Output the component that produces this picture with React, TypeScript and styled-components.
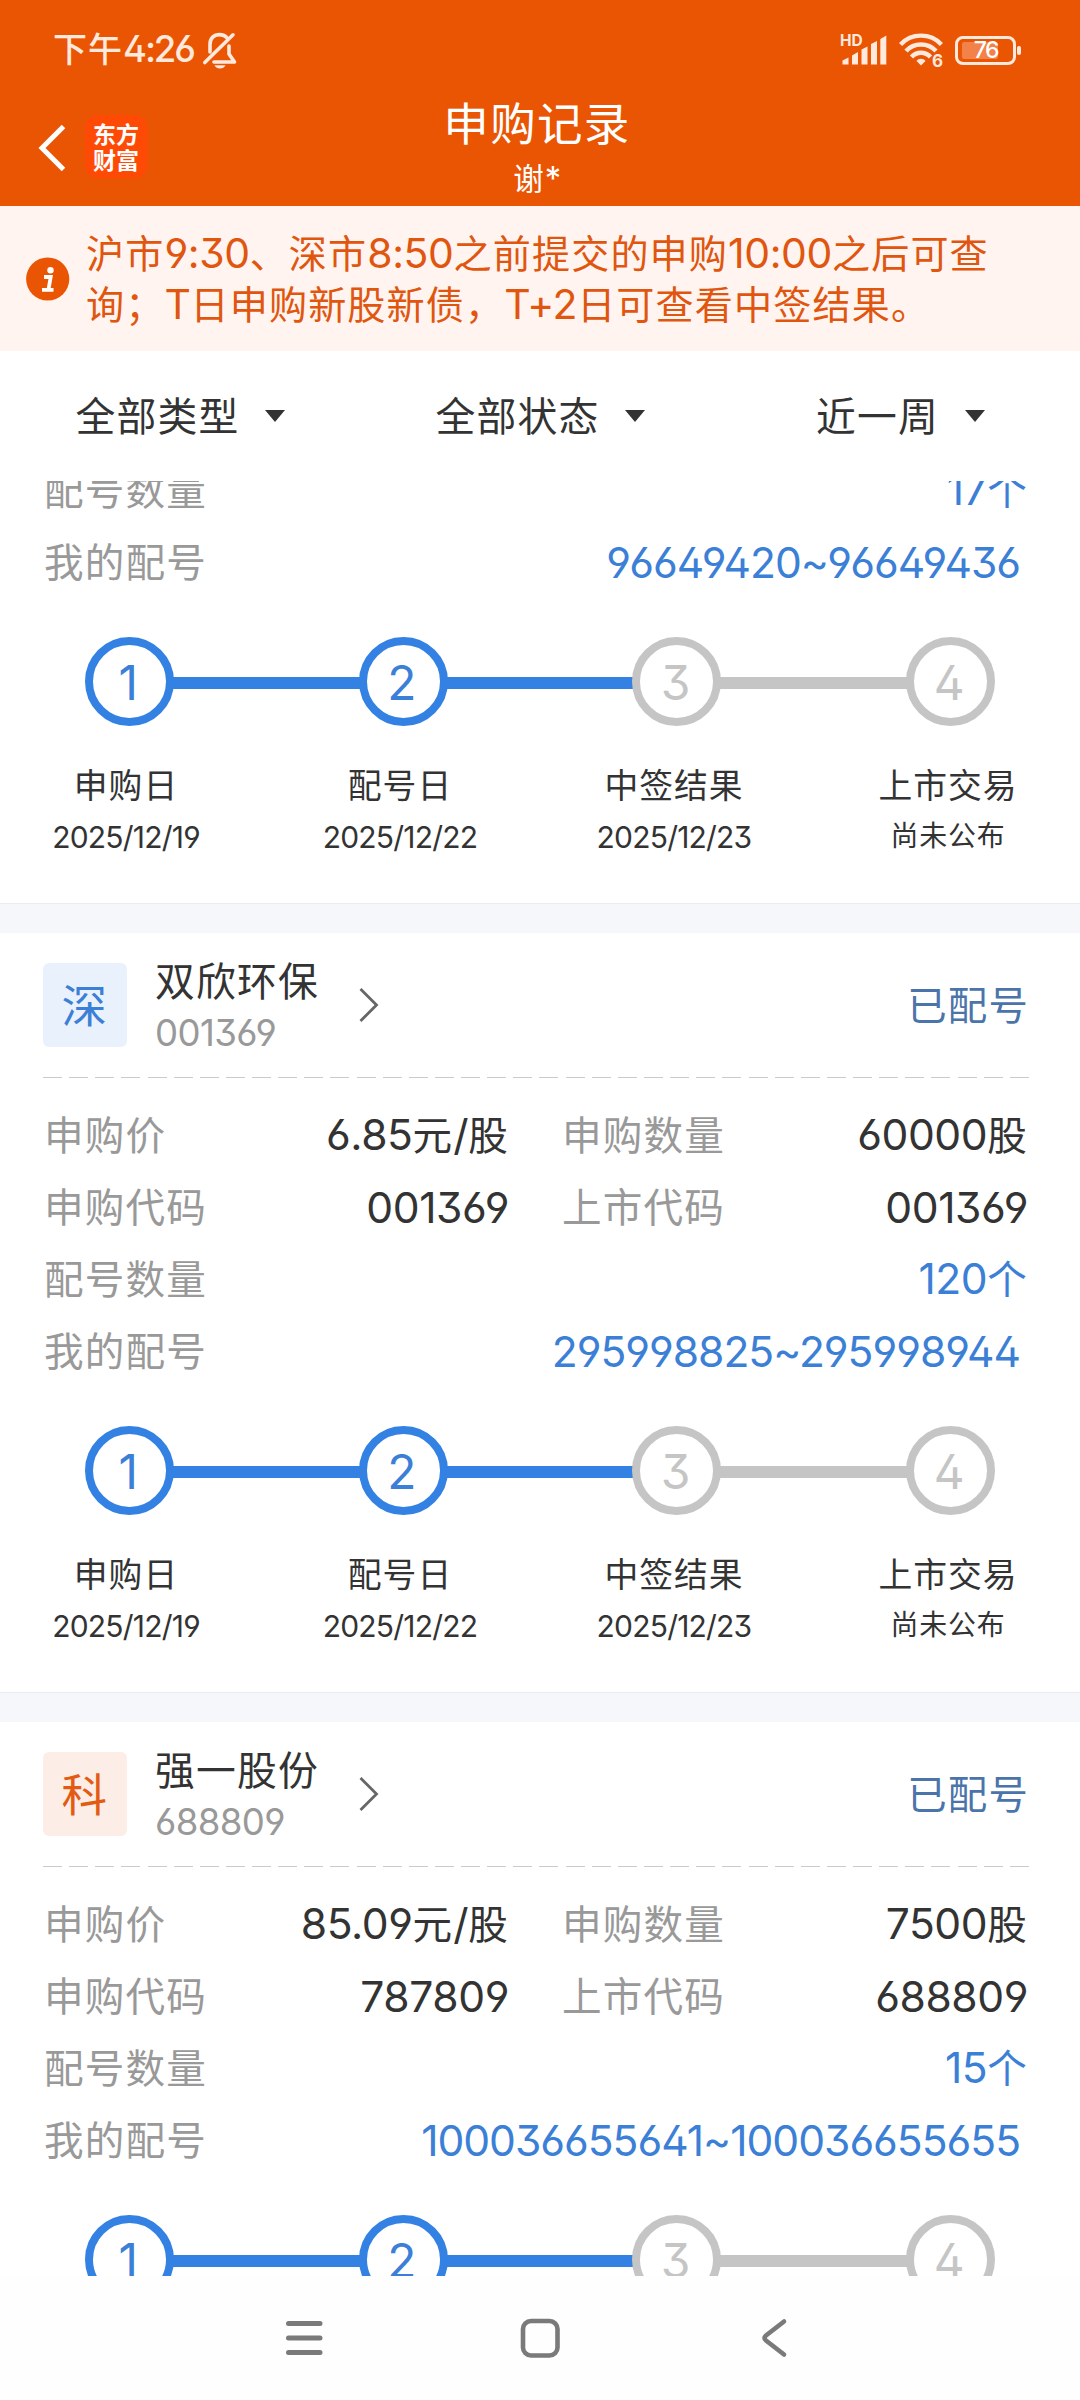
import React from "react";
import styled, { createGlobalStyle } from "styled-components";

const ORANGE = "#ea5504";
const BLUE = "#3381e3";
const GREY = "#c5c5c5";
const STATUS = "#ffe9dc";

const GlobalStyle = createGlobalStyle`
  * { box-sizing: border-box; }
  body {
    margin: 0;
    background: #fff;
    font-family: "Noto Sans CJK SC", sans-serif;
    color: #333;
  }
`;

/* ---------- text ---------- */

const Line = styled.span<{ $size: number; $color?: string; $weight?: number; $lift: boolean }>`
  font-size: ${(p) => p.$size}px;
  color: ${(p) => p.$color ?? "#333"};
  font-weight: ${(p) => p.$weight ?? 400};
  letter-spacing: 0.03em;
  white-space: nowrap;
  line-height: 1.25;
  padding-bottom: ${(p) => (p.$lift ? 3 : 0)}px;
`;

const Latin = styled.span<{ $weight?: number; $tight?: number }>`
  font-family: Inter, sans-serif;
  font-size: 1.075em;
  font-weight: ${(p) => p.$weight ?? 390};
  font-feature-settings: "ss01" 1;
  letter-spacing: ${(p) => p.$tight ?? -0.01}em;
  line-height: 1;
`;

type TextProps = { size: number; color?: string; weight?: number; tight?: number; children: string };

const Text = ({ size, color, weight, tight, children }: TextProps) => (
  <Line $size={size} $color={color} $weight={weight} $lift={/[^\x20-\x7e]/.test(children)}>
    {children
      .split(/([\x20-\x7e]+)/)
      .filter(Boolean)
      .map((run, i) =>
        /^[\x20-\x7e]/.test(run) ? (
          <Latin key={i} $weight={weight} $tight={tight}>{run}</Latin>
        ) : (
          run
        ),
      )}
  </Line>
);

/* ---------- frame ---------- */

const Screen = styled.div`
  width: 1080px;
  height: 2400px;
  display: flex;
  flex-direction: column;
  overflow: hidden;
  background: #fff;
`;

const Header = styled.header`
  height: 206px;
  flex: none;
  background: ${ORANGE};
`;

const StatusBar = styled.div`
  height: 96px;
  display: flex;
  align-items: center;
  justify-content: space-between;
  padding: 4px 59px 0 53px;
`;

const StatusGroup = styled.div<{ $gap: number }>`
  display: flex;
  align-items: center;
  gap: ${(p) => p.$gap}px;
`;

const TitleBar = styled.div`
  height: 110px;
  display: grid;
  grid-template-columns: 180px 1fr 180px;
`;

const TitleLeft = styled.div`
  display: flex;
  align-items: flex-start;
  padding: 19px 0 0 38px;
`;

const Logo = styled.div`
  width: 62px;
  height: 63px;
  margin-left: 18px;
  border-radius: 12px;
  background: #ff4a06;
  color: #fff;
  font-size: 23px;
  font-weight: 700;
  line-height: 26px;
  text-align: center;
  padding-top: 5px;
`;

const TitleCenter = styled.div`
  display: flex;
  flex-direction: column;
  align-items: center;
  padding-right: 6px;
`;

const TitleLine = styled.div`
  height: 53px;
  display: flex;
  align-items: center;
`;

const SubLine = styled.div`
  height: 60px;
  display: flex;
  align-items: center;
`;

/* ---------- notice and filters ---------- */

const Notice = styled.div`
  height: 145px;
  flex: none;
  display: flex;
  align-items: center;
  padding-left: 26px;
  background: #fff4ef;
`;

const NoticeText = styled.div`
  display: flex;
  flex-direction: column;
  margin-left: 16px;
`;

const NoticeLine = styled.div`
  height: 51px;
  display: flex;
  align-items: center;
`;

const Filters = styled.div`
  height: 130px;
  flex: none;
  display: grid;
  grid-template-columns: repeat(3, 1fr);
`;

const Filter = styled.div`
  display: flex;
  align-items: center;
  justify-content: center;
  gap: 26px;
  padding: 0 0 2px 1px;
`;

const Caret = styled.i`
  margin-top: 2px;
  border: 10px solid transparent;
  border-top: 12px solid #333;
  border-bottom: 0;
`;

/* ---------- cards ---------- */

const List = styled.main`
  height: 1795px;
  flex: none;
  overflow: hidden;
`;

const Card = styled.section<{ $partial?: boolean }>`
  height: ${(p) => (p.$partial ? 450 : 759)}px;
  margin-top: ${(p) => (p.$partial ? -28 : 0)}px;
`;

const Band = styled.div`
  height: 30px;
  background: #f6f7fa;
  border-top: 1px solid #ececee;
`;

const CardHead = styled.div`
  height: 144px;
  display: flex;
  align-items: flex-start;
  padding: 30px 51px 0 43px;
`;

const Badge = styled.div<{ $bg: string }>`
  width: 84px;
  height: 84px;
  border-radius: 6px;
  background: ${(p) => p.$bg};
  display: flex;
  align-items: center;
  justify-content: center;
`;

const NameBlock = styled.div`
  margin-left: 28px;
  width: 204px;
  display: flex;
  flex-direction: column;
`;

const NameLine = styled.div<{ $h: number }>`
  height: ${(p) => p.$h}px;
  display: flex;
  align-items: center;
`;

const HeadStatus = styled.div`
  height: 82px;
  margin-left: auto;
  display: flex;
  align-items: center;
`;

const Arrow = styled.svg`
  margin-top: 23px;
`;

const Dashes = styled.div`
  height: 1px;
  width: 986px;
  margin: 0 0 20px 43px;
  background: repeating-linear-gradient(90deg, #cacaca 0 19px, transparent 19px 26.13px);
`;

const Row = styled.div`
  height: 72px;
  display: grid;
  grid-template-columns: 465px 466px;
  column-gap: 53px;
  padding-left: 44px;
`;

const WideRow = styled(Row)`
  grid-template-columns: 984px;
`;

const Cell = styled.div<{ $inset?: number }>`
  display: flex;
  align-items: center;
  justify-content: space-between;
  padding-right: ${(p) => p.$inset ?? 0}px;
`;

const Track = styled.div`
  height: 89px;
  margin: 39.7px 85px 0;
  display: flex;
  align-items: center;
`;

const Dot = styled.div<{ $color: string }>`
  width: 89px;
  height: 89px;
  flex: none;
  border: 8.5px solid ${(p) => p.$color};
  border-radius: 50%;
  display: flex;
  align-items: center;
  justify-content: center;
  padding-right: 3px;
`;

const Bar = styled.div<{ $color: string }>`
  flex: 1;
  height: 12px;
  margin: 3px -1px 0;
  background: ${(p) => p.$color};
`;

const Captions = styled.div`
  display: flex;
  justify-content: space-between;
  padding: 34px 47px 0 41px;
`;

const Caption = styled.div`
  width: 170px;
  display: flex;
  flex-direction: column;
  align-items: center;
`;

const NavBar = styled.nav`
  height: 124px;
  flex: none;
  background: #fefefe;
  display: flex;
  align-items: center;
  justify-content: center;
  gap: 195px;
`;

/* ---------- drawings ---------- */

const BellOff = () => (
  <svg width="36" height="38" viewBox="0 0 36 38" fill="none" stroke={STATUS} strokeWidth="3.6" strokeLinecap="round" strokeLinejoin="round">
    <path d="M8 21V13.500C8 7 12 3.600 17.500 3.600c3.400 0 6 1.200 7.600 3.200" />
    <path d="M27 15v8l5.500 8H12" />
    <path d="M2.800 31.500 31 3.800" />
    <path d="M12.500 34.200h11c-1.200 2.200-3 3.300-5.500 3.300s-4.300-1.100-5.500-3.300z" fill={STATUS} stroke="none" />
  </svg>
);

const HdMark = styled.span`
  position: absolute;
  left: 0;
  top: -1px;
  font: 700 15.5px/16px Inter, sans-serif;
  color: ${STATUS};
`;

const SignalBox = styled.div`
  position: relative;
  width: 47px;
  height: 32px;
`;

const Signal = () => (
  <SignalBox>
    <svg width="47" height="32" viewBox="0 0 47 32" fill={STATUS}>
      <path d="M2.500 26.500 8.500 23.500V30.500H2.500z" />
      <path d="M12 21.500 18 18V30.500H12z" />
      <path d="M21.500 15.500 27.500 12.500V30.500H21.500z" />
      <path d="M31 10 37 7V30.500H31z" />
      <path d="M40.300 5 46.300 1.500V30.500H40.300z" />
    </svg>
    <HdMark>HD</HdMark>
  </SignalBox>
);

const WifiBox = styled.div`
  position: relative;
  width: 44px;
  height: 34px;
`;

const WifiMark = styled.span`
  position: absolute;
  right: 0;
  bottom: -3px;
  font: 700 17px/18px Inter, sans-serif;
  color: ${STATUS};
`;

const Wifi = () => (
  <WifiBox>
    <svg width="44" height="34" viewBox="0 0 44 34" fill="none" stroke={STATUS} strokeWidth="4.400">
      <path d="M1.500 11.500C12.500-.3 31.500-.3 42.500 11.500" />
      <path d="M7 18C15 9.300 29 9.300 37 18" />
      <path d="M12.500 24C17.500 18.300 26.500 18.300 31.500 24" />
      <path d="M17.500 28c2-3 7-3 9 0L22 32.500z" fill={STATUS} stroke="none" />
    </svg>
    <WifiMark>6</WifiMark>
  </WifiBox>
);

const BatteryRow = styled.div`
  display: flex;
  align-items: center;
  gap: 1.5px;
`;

const BatteryBody = styled.div`
  width: 60.5px;
  height: 29px;
  border: 3px solid ${STATUS};
  border-radius: 8px;
  padding: 3px 4px;
  display: flex;
`;

const BatteryFill = styled.div`
  width: 36px;
  height: 17px;
  border-radius: 2px;
  background: #f2814a;
  color: #fff;
  font: 500 23px/17px Inter, sans-serif;
  letter-spacing: -1.5px;
  display: flex;
  justify-content: flex-end;
`;

const BatteryTip = styled.div`
  width: 4px;
  height: 9px;
  border-radius: 2px;
  background: ${STATUS};
`;

const InfoIcon = () => (
  <svg width="44" height="44" viewBox="0 0 44 44">
    <circle cx="21.700" cy="22" r="21.600" fill={ORANGE} />
    <circle cx="24.500" cy="13.200" r="3.200" fill="#fff" />
    <path d="M18 20h6.700l-2.200 12.500M16 32.800h11.500" fill="none" stroke="#fff" strokeWidth="3.800" />
  </svg>
);

/* ---------- data ---------- */

type Issue = {
  head?: {
    board: string;
    boardColor: string;
    boardBg: string;
    name: string;
    code: string;
    price: string;
    amount: string;
    applyCode: string;
  };
  count: string;
  range: string;
};

const issues: Issue[] = [
  { count: "17个", range: "96649420~96649436" },
  {
    head: {
      board: "深", boardColor: "#3b7fd6", boardBg: "#e9f2fc",
      name: "双欣环保", code: "001369", price: "6.85元/股", amount: "60000股", applyCode: "001369",
    },
    count: "120个",
    range: "295998825~295998944",
  },
  {
    head: {
      board: "科", boardColor: "#e35a12", boardBg: "#fceee6",
      name: "强一股份", code: "688809", price: "85.09元/股", amount: "7500股", applyCode: "787809",
    },
    count: "15个",
    range: "100036655641~100036655655",
  },
];

const steps = [
  { label: "申购日", date: "2025/12/19", done: true },
  { label: "配号日", date: "2025/12/22", done: true },
  { label: "中签结果", date: "2025/12/23", done: false },
  { label: "上市交易", date: "尚未公布", done: false },
];

const Label = ({ children }: { children: string }) => <Text size={39.6} color="#999">{children}</Text>;
const Value = ({ children }: { children: string }) => <Text size={39.6}>{children}</Text>;
const Link = ({ tight, children }: { tight?: number; children: string }) => (
  <Text size={39.6} color="#3b80d6" tight={tight}>{children}</Text>
);

function IssueCard({ issue }: { issue: Issue }) {
  const h = issue.head;
  return (
    <Card $partial={!h}>
      {h && (
        <>
          <CardHead>
            <Badge $bg={h.boardBg}>
              <Text size={45.5} color={h.boardColor}>{h.board}</Text>
            </Badge>
            <NameBlock>
              <NameLine $h={35}><Text size={39.8}>{h.name}</Text></NameLine>
              <NameLine $h={69}><Text size={34} color="#999" tight={-0.016}>{h.code}</Text></NameLine>
            </NameBlock>
            <Arrow width="22" height="38" viewBox="0 0 22 38" fill="none" stroke="#666" strokeWidth="2.800">
              <path d="M1.500 3 17.500 19 1.500 35" />
            </Arrow>
            <HeadStatus><Text size={39.4} color="#4a74aa">已配号</Text></HeadStatus>
          </CardHead>
          <Dashes />
          <Row>
            <Cell><Label>申购价</Label><Value>{h.price}</Value></Cell>
            <Cell><Label>申购数量</Label><Value>{h.amount}</Value></Cell>
          </Row>
          <Row>
            <Cell><Label>申购代码</Label><Value>{h.applyCode}</Value></Cell>
            <Cell><Label>上市代码</Label><Value>{h.code}</Value></Cell>
          </Row>
        </>
      )}
      <WideRow>
        <Cell><Label>配号数量</Label><Link>{issue.count}</Link></Cell>
      </WideRow>
      <WideRow>
        <Cell $inset={8}><Label>我的配号</Label><Link tight={-0.024}>{issue.range}</Link></Cell>
      </WideRow>
      <Track>
        {steps.map((s, i) => (
          <React.Fragment key={s.label}>
            {i > 0 && <Bar $color={i < 3 ? BLUE : GREY} />}
            <Dot $color={s.done ? BLUE : GREY}>
              <Text size={44.5} color={s.done ? "#3b80d6" : GREY}>{String(i + 1)}</Text>
            </Dot>
          </React.Fragment>
        ))}
      </Track>
      <Captions>
        {steps.map((s) => (
          <Caption key={s.label}>
            <NameLine $h={51}><Text size={33.8}>{s.label}</Text></NameLine>
            <NameLine $h={51}><Text size={27.9} tight={-0.026}>{s.date}</Text></NameLine>
          </Caption>
        ))}
      </Captions>
    </Card>
  );
}

export default function App() {
  return (
    <Screen>
      <GlobalStyle />
      <Header>
        <StatusBar>
          <StatusGroup $gap={8}>
            <Text size={34} color={STATUS} weight={500} tight={-0.058}>下午4:26</Text>
            <BellOff />
          </StatusGroup>
          <StatusGroup $gap={12}>
            <Signal />
            <Wifi />
            <BatteryRow>
              <BatteryBody><BatteryFill>76</BatteryFill></BatteryBody>
              <BatteryTip />
            </BatteryRow>
          </StatusGroup>
        </StatusBar>
        <TitleBar>
          <TitleLeft>
            <svg width="29" height="64" viewBox="0 0 29 64" fill="none" stroke="#fff" strokeWidth="5">
              <path d="M25.500 11.500 4 33 25.500 54.500" />
            </svg>
            <Logo>东方<br />财富</Logo>
          </TitleLeft>
          <TitleCenter>
            <TitleLine><Text size={45.5} color="#fff">申购记录</Text></TitleLine>
            <SubLine><Text size={30.5} color="#fff">谢*</Text></SubLine>
          </TitleCenter>
        </TitleBar>
      </Header>
      <Notice>
        <InfoIcon />
        <NoticeText>
          <NoticeLine><Text size={38.1} color="#e0560f">沪市9:30、深市8:50之前提交的申购10:00之后可查</Text></NoticeLine>
          <NoticeLine><Text size={38.1} color="#e0560f">询；T日申购新股新债，T+2日可查看中签结果。</Text></NoticeLine>
        </NoticeText>
      </Notice>
      <Filters>
        {["全部类型", "全部状态", "近一周"].map((f) => (
          <Filter key={f}><Text size={39.8}>{f}</Text><Caret /></Filter>
        ))}
      </Filters>
      <List>
        {issues.map((issue, i) => (
          <React.Fragment key={issue.range}>
            {i > 0 && <Band />}
            <IssueCard issue={issue} />
          </React.Fragment>
        ))}
      </List>
      <NavBar>
        <svg width="38" height="40" viewBox="0 0 38 40" overflow="visible" stroke="#7a7a7a" strokeWidth="5" strokeLinecap="round">
          <path d="M1.500 5.500H33M1.500 20H33M1.500 34.500H33" />
        </svg>
        <svg width="40" height="40" viewBox="0 0 40 40" fill="none" stroke="#7a7a7a" strokeWidth="4.600">
          <rect x="3" y="3" width="34.500" height="34.500" rx="8" />
        </svg>
        <svg width="38" height="40" viewBox="0 0 38 40" fill="none" stroke="#7a7a7a" strokeWidth="4.600" strokeLinecap="round">
          <path d="M29 3.500 11 17.500q-3 2.500 0 5L29 36.500" />
        </svg>
      </NavBar>
    </Screen>
  );
}
